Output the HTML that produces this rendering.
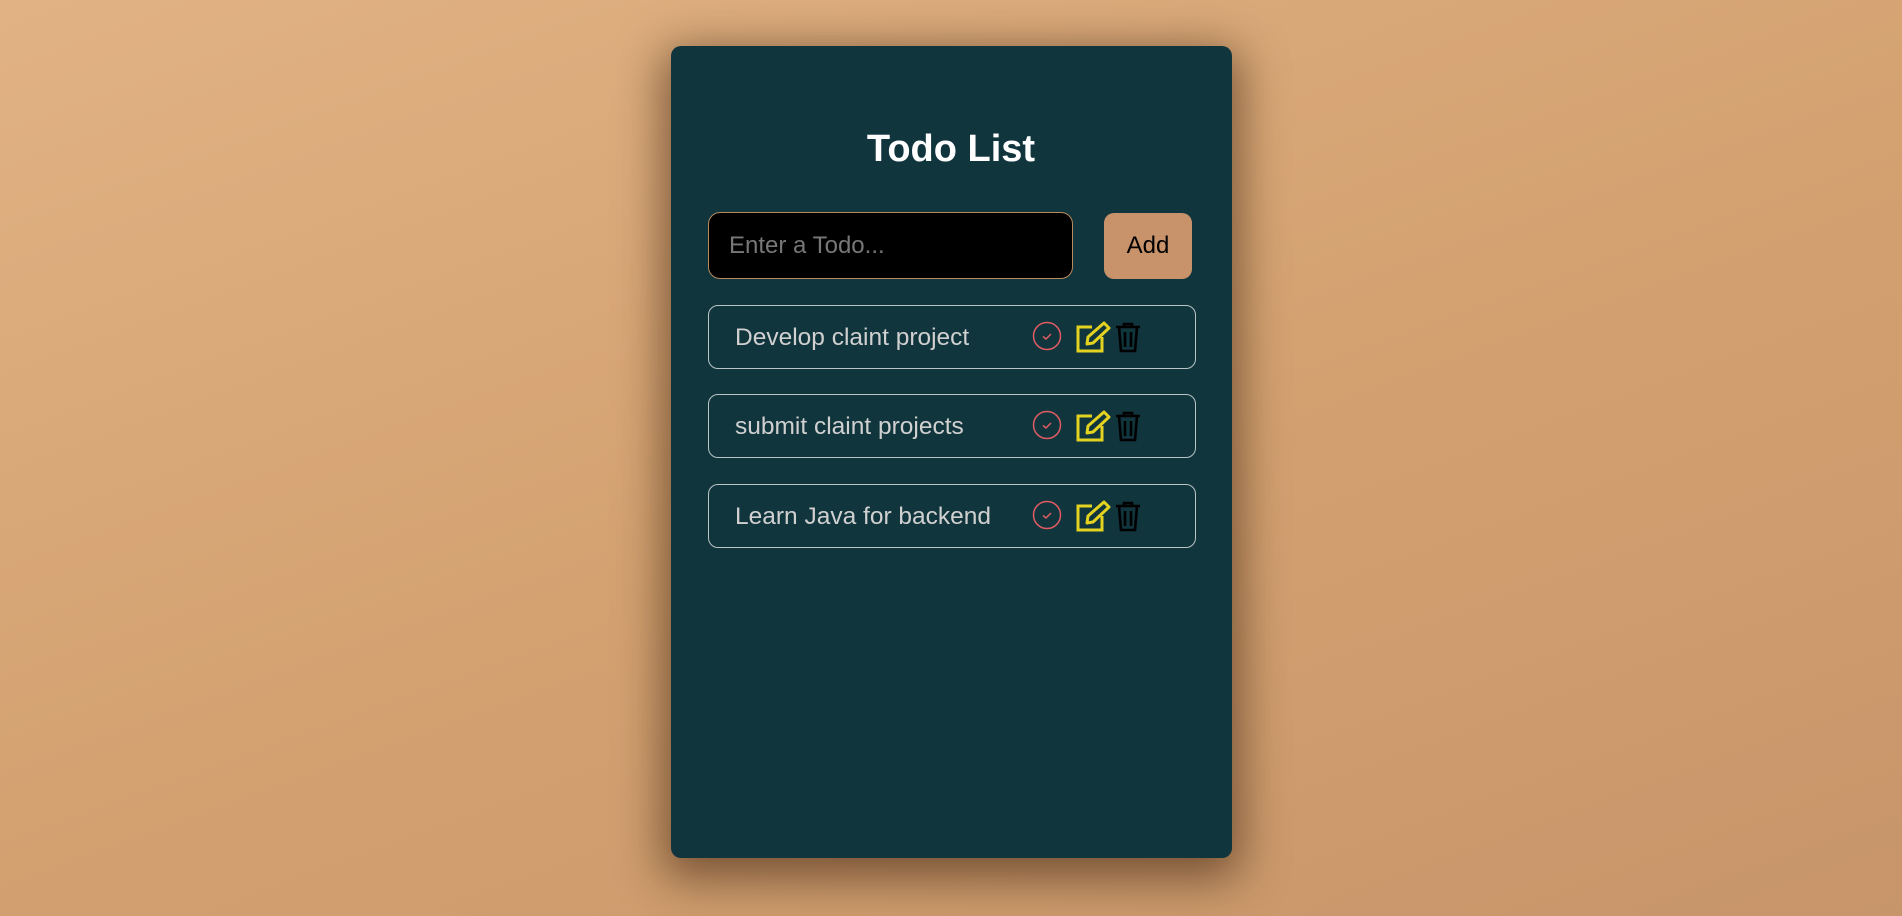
<!DOCTYPE html>
<html><head><style>
html,body{margin:0;padding:0;width:1902px;height:916px;overflow:hidden;}
body{background:linear-gradient(160deg,#e1b284 0%,#d4a271 50%,#c7956a 100%);font-family:"Liberation Sans",sans-serif;position:relative;}
.card{position:absolute;left:671px;top:46px;width:561px;height:812px;background:#11353d;border-radius:10px;box-shadow:0 12px 45px 8px rgba(60,35,15,0.6);}
h1{position:absolute;left:0;right:0;margin:0;text-align:center;color:#fff;font-size:38px;font-weight:bold;line-height:1;}
.input{position:absolute;left:708px;top:212px;width:363px;height:65px;background:#000;border:1px solid #b88a5c;border-radius:12px;color:#777;font-size:24px;line-height:65px;}
.input span{margin-left:20px;}
.add{position:absolute;left:1104px;top:213px;width:88px;height:66px;background:#c8936a;border-radius:10px;color:#000;font-size:24px;line-height:66px;text-align:center;}
.item{position:absolute;left:708px;width:486px;height:62px;border:1px solid #b8c4c6;border-radius:10px;}
.item .t{position:absolute;left:26px;top:0;line-height:64px;font-size:24.5px;color:#d0d0d0;}
.item svg{position:absolute;top:15px;}
</style></head><body>
<div class="card"></div>
<h1 style="top:130px">Todo List</h1>
<div class="input"><span>Enter a Todo...</span></div>
<div class="add">Add</div>

<div class="item" style="top:305px"><div class="t">Develop claint project</div>
<svg style="left:323px" width="30" height="30" viewBox="0 0 30 30"><circle cx="15" cy="15" r="13.5" fill="none" stroke="#e05b62" stroke-width="1.5"/><path d="M11 15.5l3 2.5 5-5" fill="none" stroke="#e05b62" stroke-width="1.5"/></svg>
<svg style="left:366px" width="38" height="32" viewBox="0 0 38 32"><path d="M17 6H3v24h24V16" fill="none" stroke="#e3d320" stroke-width="3"/><path d="M12 23l1-7L29 2l5 5-16 15z" fill="none" stroke="#e3d320" stroke-width="3" stroke-linejoin="round"/></svg>
<svg style="left:405px" width="28" height="32" viewBox="0 0 28 32"><path d="M2 6h24M10 6V3h8v3M5 6l2 24h14l2-24M11 11v15M17 11v15" fill="none" stroke="#000" stroke-width="2.6"/></svg>
</div>

<div class="item" style="top:394px"><div class="t">submit claint projects</div>
<svg style="left:323px" width="30" height="30" viewBox="0 0 30 30"><circle cx="15" cy="15" r="13.5" fill="none" stroke="#e05b62" stroke-width="1.5"/><path d="M11 15.5l3 2.5 5-5" fill="none" stroke="#e05b62" stroke-width="1.5"/></svg>
<svg style="left:366px" width="38" height="32" viewBox="0 0 38 32"><path d="M17 6H3v24h24V16" fill="none" stroke="#e3d320" stroke-width="3"/><path d="M12 23l1-7L29 2l5 5-16 15z" fill="none" stroke="#e3d320" stroke-width="3" stroke-linejoin="round"/></svg>
<svg style="left:405px" width="28" height="32" viewBox="0 0 28 32"><path d="M2 6h24M10 6V3h8v3M5 6l2 24h14l2-24M11 11v15M17 11v15" fill="none" stroke="#000" stroke-width="2.6"/></svg>
</div>

<div class="item" style="top:484px"><div class="t">Learn Java for backend</div>
<svg style="left:323px" width="30" height="30" viewBox="0 0 30 30"><circle cx="15" cy="15" r="13.5" fill="none" stroke="#e05b62" stroke-width="1.5"/><path d="M11 15.5l3 2.5 5-5" fill="none" stroke="#e05b62" stroke-width="1.5"/></svg>
<svg style="left:366px" width="38" height="32" viewBox="0 0 38 32"><path d="M17 6H3v24h24V16" fill="none" stroke="#e3d320" stroke-width="3"/><path d="M12 23l1-7L29 2l5 5-16 15z" fill="none" stroke="#e3d320" stroke-width="3" stroke-linejoin="round"/></svg>
<svg style="left:405px" width="28" height="32" viewBox="0 0 28 32"><path d="M2 6h24M10 6V3h8v3M5 6l2 24h14l2-24M11 11v15M17 11v15" fill="none" stroke="#000" stroke-width="2.6"/></svg>
</div>
</body></html>
